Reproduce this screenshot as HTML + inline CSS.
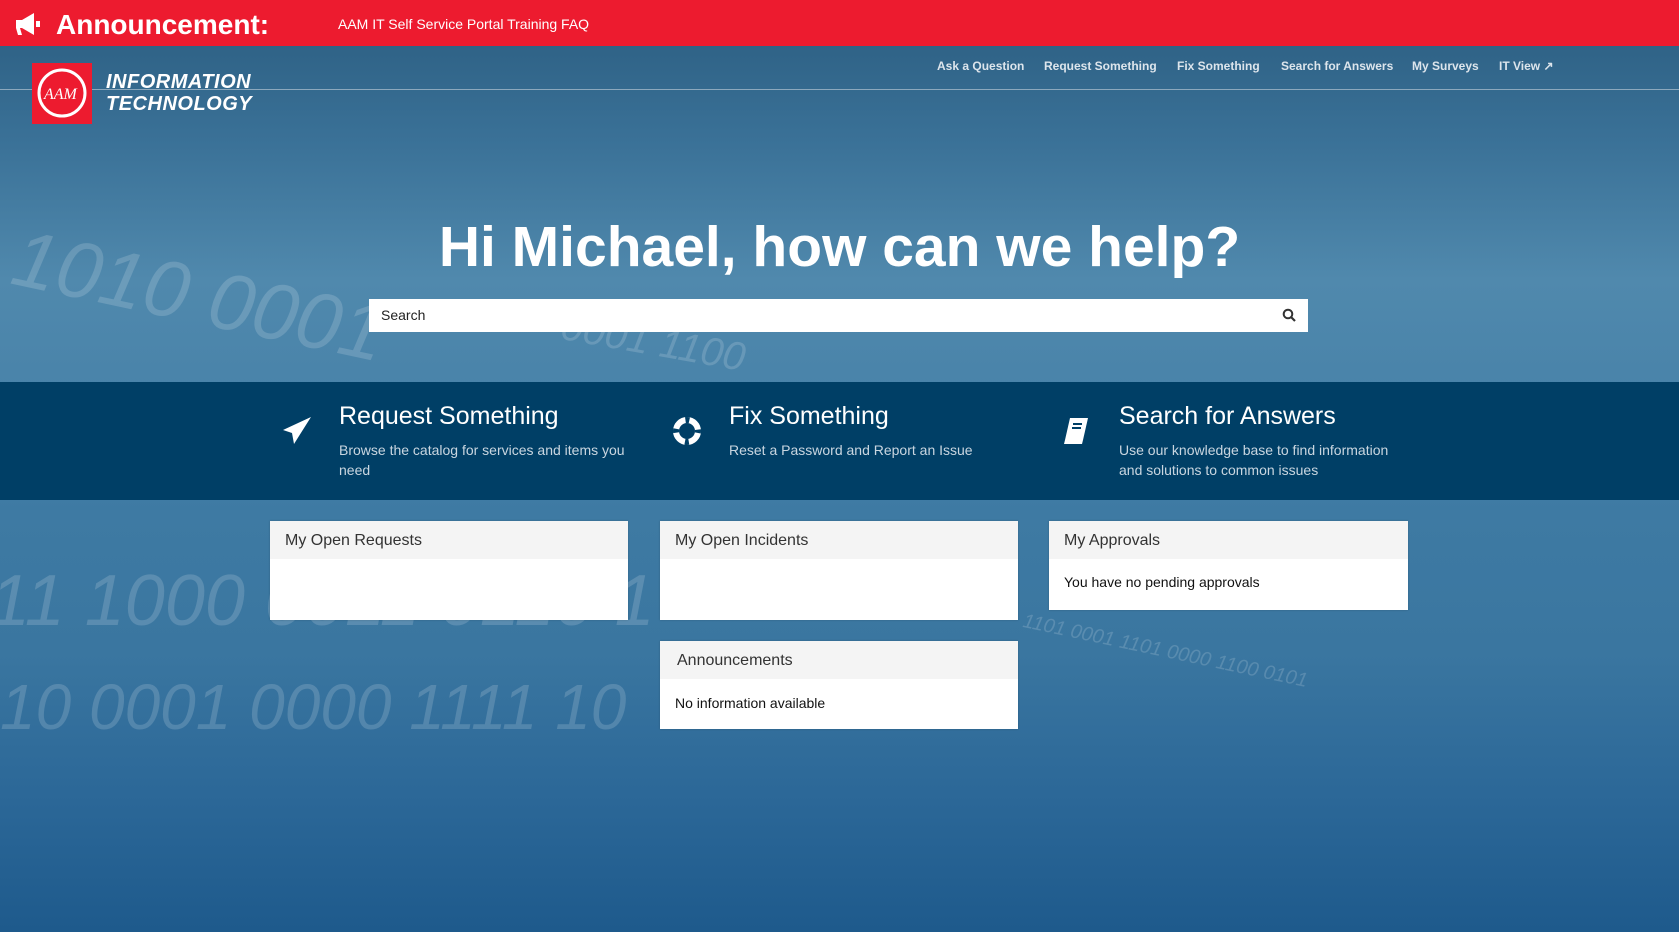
<!DOCTYPE html>
<html><head><meta charset="utf-8"><style>
*{margin:0;padding:0;box-sizing:border-box}
body{width:1679px;height:932px;overflow:hidden;font-family:"Liberation Sans",Arial,sans-serif;position:relative;
background:linear-gradient(180deg,#2a5c7f 0%,#3a7197 15%,#5089ad 30%,#4a84aa 40%,#3e7aa3 55%,#3a76a0 70%,#2c6898 85%,#1e5a8c 100%);}
.abs{position:absolute}
.top{left:0;top:0;width:1679px;height:46px;background:#ed1b2f}
.digits{color:rgba(255,255,255,.16);font-style:italic;white-space:nowrap;font-family:"Liberation Sans",sans-serif}
.nav a{position:absolute;top:59px;color:#dde5ec;font-size:12px;font-weight:bold;text-decoration:none}
.band{left:0;top:382px;width:1679px;height:118px;background:#003f66}
.bt{color:#fff;font-size:25px;top:402px}
.bd{color:#c9d6e0;font-size:14px;line-height:20px;top:440px}
.card{background:#fff;position:absolute;box-shadow:0 0 2px rgba(0,0,0,.2)}
.card .h{background:#f4f4f4;height:38px;padding:11px 15px;font-size:16px;color:#333}
.card .b{padding:15px;font-size:14px;color:#111}
</style></head><body>
<div class="abs digits" style="left:10px;top:250px;font-size:80px;transform:rotate(12deg)">1010 0001</div>
<div class="abs digits" style="left:-10px;top:560px;font-size:72px">11 1000 0011 0110 1</div>
<div class="abs digits" style="left:0;top:670px;font-size:64px">10 0001 0000 1111 10</div>
<div class="abs digits" style="left:560px;top:320px;font-size:40px;transform:rotate(10deg)">0001 1100</div>
<div class="abs digits" style="left:1020px;top:640px;font-size:20px;transform:rotate(12deg)">1101 0001 1101 0000 1100 0101</div>
<div class="abs top"></div>
<svg class="abs" style="left:14px;top:12px" width="28" height="24" viewBox="0 0 28 24"><path d="M2 8h6l12-7v22L8 16H6l2 7H4l-2-7z" fill="#fff"/><rect x="22" y="9" width="4" height="6" fill="#fff"/></svg>
<div class="abs" style="left:56px;top:9px;color:#fff;font-size:28px;font-weight:bold">Announcement:</div>
<div class="abs" style="left:338px;top:16px;color:#fff;font-size:14px">AAM IT Self Service Portal Training FAQ</div>
<div class="abs" style="left:0;top:89px;width:1679px;height:1px;background:rgba(200,210,220,.6)"></div>
<div class="abs" style="left:32px;top:63px;width:60px;height:61px;background:#ed1b2f"></div>
<svg class="abs" style="left:32px;top:63px" width="60" height="61"><ellipse cx="30" cy="30" rx="23" ry="23" fill="none" stroke="#fff" stroke-width="3"/><text x="12" y="36" fill="#fff" font-size="16" font-style="italic" font-family="Liberation Serif">AAM</text></svg>
<div class="abs" style="left:106px;top:71px;color:#fff;font-size:20px;font-weight:bold;font-style:italic;line-height:22px;letter-spacing:0.5px">INFORMATION<br>TECHNOLOGY</div>
<div class="nav"><a style="left:937px">Ask a Question</a><a style="left:1044px">Request Something</a><a style="left:1177px">Fix Something</a><a style="left:1281px">Search for Answers</a><a style="left:1412px">My Surveys</a><a style="left:1499px">IT View ↗</a></div>
<div class="abs" style="left:0;width:1679px;top:214px;text-align:center;color:#fff;font-size:57px;font-weight:bold">Hi Michael, how can we help?</div>
<div class="abs" style="left:369px;top:299px;width:939px;height:33px;background:#fff"></div>
<div class="abs" style="left:381px;top:307px;font-size:14px;color:#222">Search</div>
<svg class="abs" style="left:1282px;top:308px" width="14" height="14"><circle cx="6" cy="6" r="4.3" fill="none" stroke="#333" stroke-width="2"/><path d="M9 9l4 4" stroke="#333" stroke-width="2.2"/></svg>
<div class="abs band"></div>
<svg class="abs" style="left:282px;top:416px" width="30" height="30" viewBox="0 0 30 30"><path d="M29 1L1 14l9 3 2 11 5-8z" fill="#fff"/></svg>
<div class="abs bt" style="left:339px">Request Something</div>
<div class="abs bd" style="left:339px;width:300px">Browse the catalog for services and items you need</div>
<svg class="abs" style="left:672px;top:416px" width="30" height="30" viewBox="0 0 30 30"><circle cx="15" cy="15" r="11" fill="none" stroke="#fff" stroke-width="6"/><circle cx="15" cy="15" r="11" fill="none" stroke="#003f66" stroke-width="6" stroke-dasharray="4 13.3" stroke-dashoffset="2"/></svg>
<div class="abs bt" style="left:729px">Fix Something</div>
<div class="abs bd" style="left:729px">Reset a Password and Report an Issue</div>
<svg class="abs" style="left:1062px;top:416px" width="28" height="30" viewBox="0 0 28 30"><path d="M8 2h18l-5 22H3z" fill="#fff"/><path d="M3 24h18l-1 4H2z" fill="#fff"/><path d="M11 8h9M10 12h9" stroke="#003f66" stroke-width="2"/></svg>
<div class="abs bt" style="left:1119px">Search for Answers</div>
<div class="abs bd" style="left:1119px;width:290px">Use our knowledge base to find information and solutions to common issues</div>
<div class="card" style="left:270px;top:521px;width:358px;height:99px"><div class="h">My Open Requests</div></div>
<div class="card" style="left:660px;top:521px;width:358px;height:99px"><div class="h">My Open Incidents</div></div>
<div class="card" style="left:1049px;top:521px;width:359px;height:89px"><div class="h">My Approvals</div><div class="b" style="padding-top:15px">You have no pending approvals</div></div>
<div class="card" style="left:660px;top:641px;width:358px;height:88px"><div class="h" style="padding-left:17px">Announcements</div><div class="b" style="padding-top:16px">No information available</div></div>
</body></html>
